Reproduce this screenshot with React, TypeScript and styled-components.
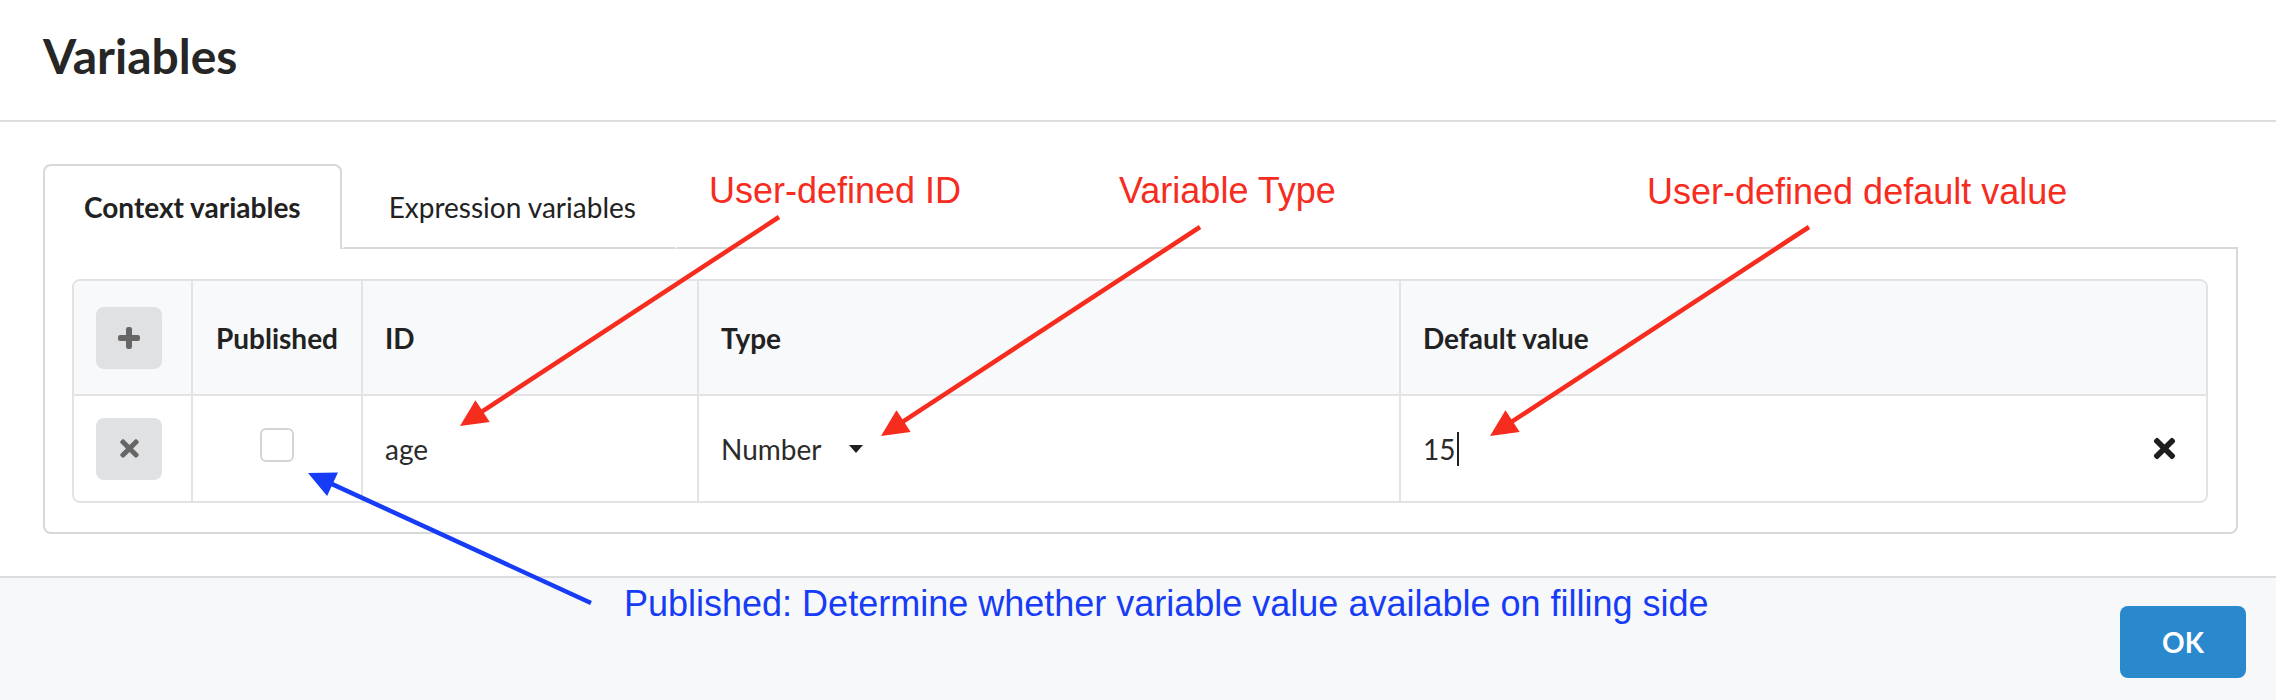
import React from "react";
import styled, { createGlobalStyle } from "styled-components";
import { FaTimes } from "react-icons/fa";

const GlobalStyle = createGlobalStyle`
  html, body { margin: 0; padding: 0; background: #ffffff; }
  * { box-sizing: border-box; }
`;

const Page = styled.div`
  position: relative;
  width: 2276px;
  height: 700px;
  overflow: hidden;
  background: #ffffff;
  font-family: Lato, "Open Sans", sans-serif;
  color: #222222;
`;

const Header = styled.header`
  height: 122px;
  padding: 27px 0 0 43px;
  border-bottom: 2px solid #dddddd;
`;

const Title = styled.h1`
  margin: 0;
  font-size: 48px;
  font-weight: 700;
  line-height: normal;
  color: #262626;
`;

const Body = styled.section`
  padding: 42px 38px 42px 43px;
`;

const TabBar = styled.div`
  display: flex;
  height: 85px;
`;

const Tab = styled.div<{ $active?: boolean }>`
  height: 85px;
  padding: 24px 39px 0 ${(p) => (p.$active ? "39px" : "45px")};
  font-size: 28px;
  line-height: normal;
  font-weight: ${(p) => (p.$active ? 700 : 400)};
  color: #222222;
  background: #ffffff;
  border: 2px solid ${(p) => (p.$active ? "#d8d8d8" : "transparent")};
  border-bottom: ${(p) => (p.$active ? "none" : "2px solid #d8d8d8")};
  border-radius: ${(p) => (p.$active ? "8px 8px 0 0" : "0")};
  white-space: nowrap;
`;

const TabFill = styled.div`
  flex: 1;
  border-bottom: 2px solid #d8d8d8;
`;

const Panel = styled.div`
  border: 2px solid #d8d8d8;
  border-top: none;
  border-radius: 0 0 8px 8px;
  padding: 30px 28px 29px 27px;
`;

const Table = styled.div`
  border: 2px solid #e2e3e5;
  border-radius: 8px;
  overflow: hidden;
`;

const Row = styled.div<{ $head?: boolean }>`
  display: grid;
  grid-template-columns: 117px 170px 336px 702px 1fr;
  height: ${(p) => (p.$head ? "115px" : "105px")};
  background: ${(p) => (p.$head ? "#f8f9fa" : "#ffffff")};
  border-bottom: ${(p) => (p.$head ? "2px solid #e2e3e5" : "none")};
  font-size: 28px;
  font-weight: ${(p) => (p.$head ? 700 : 400)};
  color: ${(p) => (p.$head ? "#222222" : "#2b2b2b")};
`;

const Cell = styled.div<{ $align?: "center" | "start" | "between"; $first?: boolean }>`
  display: flex;
  align-items: center;
  justify-content: ${(p) =>
    p.$align === "center" ? "center" : p.$align === "between" ? "space-between" : "flex-start"};
  padding: ${(p) => (p.$first ? "0 0 0 22px" : p.$align === "center" ? "0" : "0 26px 0 22px")};
  border-left: ${(p) => (p.$first ? "none" : "2px solid #e2e3e5")};
  white-space: nowrap;
`;

const IconButton = styled.div`
  width: 66px;
  height: 62px;
  border-radius: 8px;
  background: #e0e1e3;
  color: #666666;
  display: flex;
  align-items: center;
  justify-content: center;
`;

const Checkbox = styled.div`
  width: 34px;
  height: 34px;
  margin-bottom: 8px;
  border: 2px solid #d4d4d4;
  border-radius: 6px;
  background: #ffffff;
`;

const SelectValue = styled.div`
  display: flex;
  align-items: center;
  gap: 28px;
`;

const InputValue = styled.div`
  display: flex;
  align-items: center;
`;

const Cursor = styled.span`
  display: inline-block;
  width: 2px;
  height: 34px;
  margin-left: 2px;
  background: #222222;
`;

const RemoveIcon = styled.span`
  display: flex;
  color: #1e1e1e;
`;

const Footer = styled.footer`
  height: 124px;
  border-top: 2px solid #dcdcdc;
  background: #f7f8fa;
  padding: 28px 30px 0 0;
  display: flex;
  justify-content: flex-end;
  align-items: flex-start;
`;

const OkButton = styled.button`
  width: 126px;
  height: 72px;
  border: none;
  border-radius: 8px;
  background: #2a88cd;
  color: #ffffff;
  font-family: Lato, "Open Sans", sans-serif;
  font-size: 28px;
  font-weight: 700;
  cursor: pointer;
`;

const Note = styled.div<{ $color: string; $left: number; $top: number }>`
  position: absolute;
  left: ${(p) => p.$left}px;
  top: ${(p) => p.$top}px;
  font-family: "Liberation Sans", Arial, sans-serif;
  font-size: 36px;
  line-height: 36px;
  color: ${(p) => p.$color};
  white-space: nowrap;
  pointer-events: none;
`;

const Overlay = styled.svg`
  position: absolute;
  left: 0;
  top: 0;
  pointer-events: none;
`;

type ArrowProps = { x1: number; y1: number; x2: number; y2: number; color: string };

function Arrow({ x1, y1, x2, y2, color }: ArrowProps) {
  const dx = x2 - x1;
  const dy = y2 - y1;
  const len = Math.hypot(dx, dy);
  const ux = dx / len;
  const uy = dy / len;
  const L = 27;
  const W = 13;
  const bx = x2 - ux * L;
  const by = y2 - uy * L;
  const px = -uy;
  const py = ux;
  const pts = `${x2},${y2} ${bx + px * W},${by + py * W} ${bx - px * W},${by - py * W}`;
  return (
    <g>
      <line x1={x1} y1={y1} x2={x2 - ux * (L - 4)} y2={y2 - uy * (L - 4)} stroke={color} strokeWidth={4.5} />
      <polygon points={pts} fill={color} />
    </g>
  );
}

function PlusIcon() {
  return (
    <svg width="22" height="22" viewBox="0 0 22 22">
      <rect x="8" y="0" width="6" height="22" rx="2.2" fill="currentColor" />
      <rect x="0" y="8" width="22" height="6" rx="2.2" fill="currentColor" />
    </svg>
  );
}

function Caret() {
  return (
    <svg width="14" height="8" viewBox="0 0 14 8">
      <path d="M0 0 H14 L7 8 Z" fill="#1e1e1e" />
    </svg>
  );
}

const RED = "#f62c1f";
const BLUE = "#173cf6";

export default function App() {
  return (
    <>
      <GlobalStyle />
      <Page>
        <Header>
          <Title>Variables</Title>
        </Header>
        <Body>
          <TabBar>
            <Tab $active>Context variables</Tab>
            <Tab>Expression variables</Tab>
            <TabFill />
          </TabBar>
          <Panel>
            <Table>
              <Row $head>
                <Cell $first>
                  <IconButton>
                    <PlusIcon />
                  </IconButton>
                </Cell>
                <Cell $align="center">Published</Cell>
                <Cell>ID</Cell>
                <Cell>Type</Cell>
                <Cell>Default value</Cell>
              </Row>
              <Row>
                <Cell $first>
                  <IconButton>
                    <FaTimes size={27} />
                  </IconButton>
                </Cell>
                <Cell $align="center">
                  <Checkbox />
                </Cell>
                <Cell>age</Cell>
                <Cell>
                  <SelectValue>
                    <span>Number</span>
                    <Caret />
                  </SelectValue>
                </Cell>
                <Cell $align="between">
                  <InputValue>
                    <span>15</span>
                    <Cursor />
                  </InputValue>
                  <RemoveIcon>
                    <FaTimes size={31} />
                  </RemoveIcon>
                </Cell>
              </Row>
            </Table>
          </Panel>
        </Body>
        <Footer>
          <OkButton>OK</OkButton>
        </Footer>

        <Note $color={RED} $left={709} $top={172.5}>User-defined ID</Note>
        <Note $color={RED} $left={1119} $top={172.5}>Variable Type</Note>
        <Note $color={RED} $left={1647} $top={173.5}>User-defined default value</Note>
        <Note $color={BLUE} $left={624} $top={585.5}>
          Published: Determine whether variable value available on filling side
        </Note>

        <Overlay width={2276} height={700} viewBox="0 0 2276 700">
          <Arrow x1={779} y1={217} x2={460} y2={426} color={RED} />
          <Arrow x1={1200} y1={227} x2={881} y2={436} color={RED} />
          <Arrow x1={1809} y1={227} x2={1490} y2={436} color={RED} />
          <Arrow x1={591} y1={603} x2={308} y2={473} color={BLUE} />
        </Overlay>
      </Page>
    </>
  );
}
